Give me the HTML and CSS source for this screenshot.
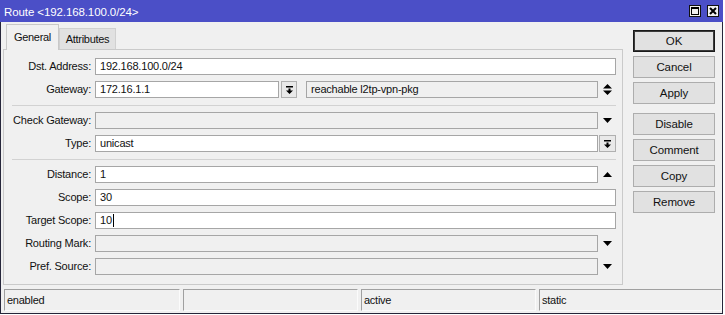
FILE: index.html
```html
<!DOCTYPE html>
<html>
<head>
<meta charset="utf-8">
<link rel="stylesheet" href="styles.css">
</head>
<body>
<div class="window">
  <div class="titlebar">
    <span class="title">Route &lt;192.168.100.0/24&gt;</span>
    <div class="wbtns">
      <span class="wbtn"><svg width="8" height="8" viewBox="0 0 8 8"><rect x="0.5" y="0.5" width="7" height="7" fill="none" stroke="#000"/><rect x="0" y="0" width="8" height="2" fill="#000"/></svg></span>
      <span class="wbtn"><svg width="8" height="8" viewBox="0 0 8 8"><path d="M1 1L7 7M7 1L1 7" stroke="#000" stroke-width="2"/></svg></span>
    </div>
  </div>
  <div class="main">
    <div class="left">
      <div class="tabs">
        <div class="tab active">General</div>
        <div class="tab">Attributes</div>
      </div>
      <div class="panel">
        <div class="row">
          <div class="label">Dst. Address:</div>
          <div class="field">192.168.100.0/24</div>
        </div>
        <div class="row">
          <div class="label">Gateway:</div>
          <div class="field gw">172.16.1.1</div>
          <div class="btn-icon gw-btn"><svg width="7" height="8" viewBox="0 0 7 8"><rect x="0" y="0" width="7" height="1.5" fill="#000"/><path d="M2.5 2.5h2v2h2.5L3.5 8 0 4.5h2.5z" fill="#000"/></svg></div>
          <div class="field ro reach">reachable l2tp-vpn-pkg</div>
          <div class="side"><svg width="9" height="11" viewBox="0 0 9 11"><path d="M0 4.5L4.5 0 9 4.5zM0 6.5h9L4.5 11z" fill="#000"/></svg></div>
        </div>
        <div class="sep"></div>
        <div class="row">
          <div class="label">Check Gateway:</div>
          <div class="field ro"></div>
          <div class="side"><svg width="9" height="5" viewBox="0 0 9 5"><path d="M0 0h9L4.5 5z" fill="#000"/></svg></div>
        </div>
        <div class="row">
          <div class="label">Type:</div>
          <div class="field">unicast</div>
          <div class="btn-icon type-btn"><svg width="7" height="8" viewBox="0 0 7 8"><rect x="0" y="0" width="7" height="1.5" fill="#000"/><path d="M2.5 2.5h2v2h2.5L3.5 8 0 4.5h2.5z" fill="#000"/></svg></div>
        </div>
        <div class="sep"></div>
        <div class="row">
          <div class="label">Distance:</div>
          <div class="field">1</div>
          <div class="side"><svg width="9" height="5" viewBox="0 0 9 5"><path d="M0 5h9L4.5 0z" fill="#000"/></svg></div>
        </div>
        <div class="row">
          <div class="label">Scope:</div>
          <div class="field">30</div>
        </div>
        <div class="row">
          <div class="label">Target Scope:</div>
          <div class="field">10<span class="caret"></span></div>
        </div>
        <div class="row">
          <div class="label">Routing Mark:</div>
          <div class="field ro"></div>
          <div class="side"><svg width="9" height="5" viewBox="0 0 9 5"><path d="M0 0h9L4.5 5z" fill="#000"/></svg></div>
        </div>
        <div class="row">
          <div class="label">Pref. Source:</div>
          <div class="field ro"></div>
          <div class="side"><svg width="9" height="5" viewBox="0 0 9 5"><path d="M0 0h9L4.5 5z" fill="#000"/></svg></div>
        </div>
      </div>
    </div>
    <div class="buttons">
      <div class="button default">OK</div>
      <div class="button">Cancel</div>
      <div class="button">Apply</div>
      <div class="button spaced">Disable</div>
      <div class="button">Comment</div>
      <div class="button">Copy</div>
      <div class="button">Remove</div>
    </div>
  </div>
  <div class="status">
    <div class="seg s1">enabled</div>
    <div class="seg s2"></div>
    <div class="seg s3">active</div>
    <div class="seg s4">static</div>
  </div>
</div>
</body>
</html>
```
FILE: styles.css
```css
html, body {
  margin: 0;
  padding: 0;
  background: #ffffff;
}
body {
  font-family: "Liberation Sans", Arial, sans-serif;
  font-size: 11px;
  color: #111;
}
.window {
  box-sizing: border-box;
  width: 723px;
  height: 314px;
  background: #f0f0f0;
  border: 1px solid #26263a;
  border-top: none;
  display: flex;
  flex-direction: column;
}
.titlebar {
  height: 22px;
  background: #4b4fc7;
  color: #fff;
  display: flex;
  align-items: center;
  justify-content: space-between;
  padding-left: 4px;
  margin: 0 -1px;
  padding-right: 4px;
}
.title {
  font-size: 11.5px;
  letter-spacing: -0.1px;
  padding-top: 1px;
}
.wbtns {
  display: flex;
  gap: 6px;
}
.wbtn {
  box-sizing: border-box;
  width: 12px;
  height: 12px;
  background: #f0f0f0;
  border: 1px solid #111;
  display: flex;
  align-items: center;
  justify-content: center;
}
.wbtn svg { display: block; }
.main {
  display: flex;
}
.left {
  width: 620px;
  margin-left: 2px;
}
.tabs {
  height: 27px;
  display: flex;
  align-items: flex-end;
  padding-left: 3px;
  position: relative;
  z-index: 1;
}
.tab {
  box-sizing: border-box;
  height: 21px;
  width: 57px;
  background: #e1e1e1;
  border: 1px solid #d0d0d0;
  border-bottom: none;
  display: flex;
  align-items: center;
  justify-content: center;
  letter-spacing: -0.3px;
}
.tab.active {
  width: 53px;
  height: 26px;
  margin-bottom: -1px;
  background: #f0f0f0;
  border-color: #c8c8c8;
  padding-bottom: 1px;
}
.panel {
  box-sizing: border-box;
  height: 236px;
  border: 1px solid #cacaca;
  padding: 8px 6px 0 0;
  display: flex;
  flex-direction: column;
  gap: 6px;
}
.row {
  display: flex;
  height: 17px;
  align-items: stretch;
}
.label {
  box-sizing: border-box;
  flex: 0 0 91px;
  text-align: right;
  padding-right: 4px;
  line-height: 17px;
  letter-spacing: -0.2px;
}
.field {
  box-sizing: border-box;
  flex: 1;
  height: 17px;
  border: 1px solid #a6a6a6;
  background: #fff;
  padding: 0 4px;
  line-height: 15px;
  letter-spacing: -0.2px;
  white-space: nowrap;
}
.field.ro {
  background: #f0f0f0;
}
.field.gw {
  flex: 0 0 184px;
}
.field.reach {
  margin-left: 9px;
}
.btn-icon {
  box-sizing: border-box;
  height: 17px;
  background: #e9e9e9;
  border: 1px solid #b0b0b0;
  display: flex;
  align-items: center;
  justify-content: center;
}
.btn-icon svg { display: block; }
.gw-btn {
  width: 16px;
  margin-left: 2px;
}
.type-btn {
  width: 17px;
  margin-left: 1px;
}
.side {
  flex: 0 0 18px;
  display: flex;
  align-items: center;
  justify-content: center;
}
.side svg { display: block; }
.sep {
  height: 1px;
  background: #d2d2d2;
  margin-left: 8px;
  margin-top: 1px;
}
.caret {
  display: inline-block;
  width: 1px;
  height: 13px;
  background: #000;
  vertical-align: -3px;
  margin-left: 1px;
}
.buttons {
  width: 82px;
  margin-left: 10px;
  padding-top: 8px;
  display: flex;
  flex-direction: column;
  gap: 4px;
}
.button {
  box-sizing: border-box;
  height: 22px;
  background: #e1e1e1;
  border: 1px solid #adadad;
  display: flex;
  align-items: center;
  justify-content: center;
  font-size: 11.5px;
  letter-spacing: -0.1px;
}
.button.default {
  border: 1px solid #1a1a1a;
  box-shadow: inset 0 0 0 1px #3a3a3a;
}
.button.spaced {
  margin-top: 5px;
}
.status {
  margin-top: 4px;
  height: 22px;
  display: flex;
  gap: 3px;
  padding-left: 3px;
}
.seg {
  box-sizing: border-box;
  border-top: 1px solid #a0a0a0;
  border-left: 1px solid #a0a0a0;
  border-right: 1px solid #fbfbfb;
  border-bottom: 1px solid #fbfbfb;
  padding-left: 2px;
  line-height: 20px;
  letter-spacing: -0.25px;
}
.s1 { width: 176px; }
.s2 { width: 175px; }
.s3 { width: 175px; }
.s4 { flex: 1; }
```
